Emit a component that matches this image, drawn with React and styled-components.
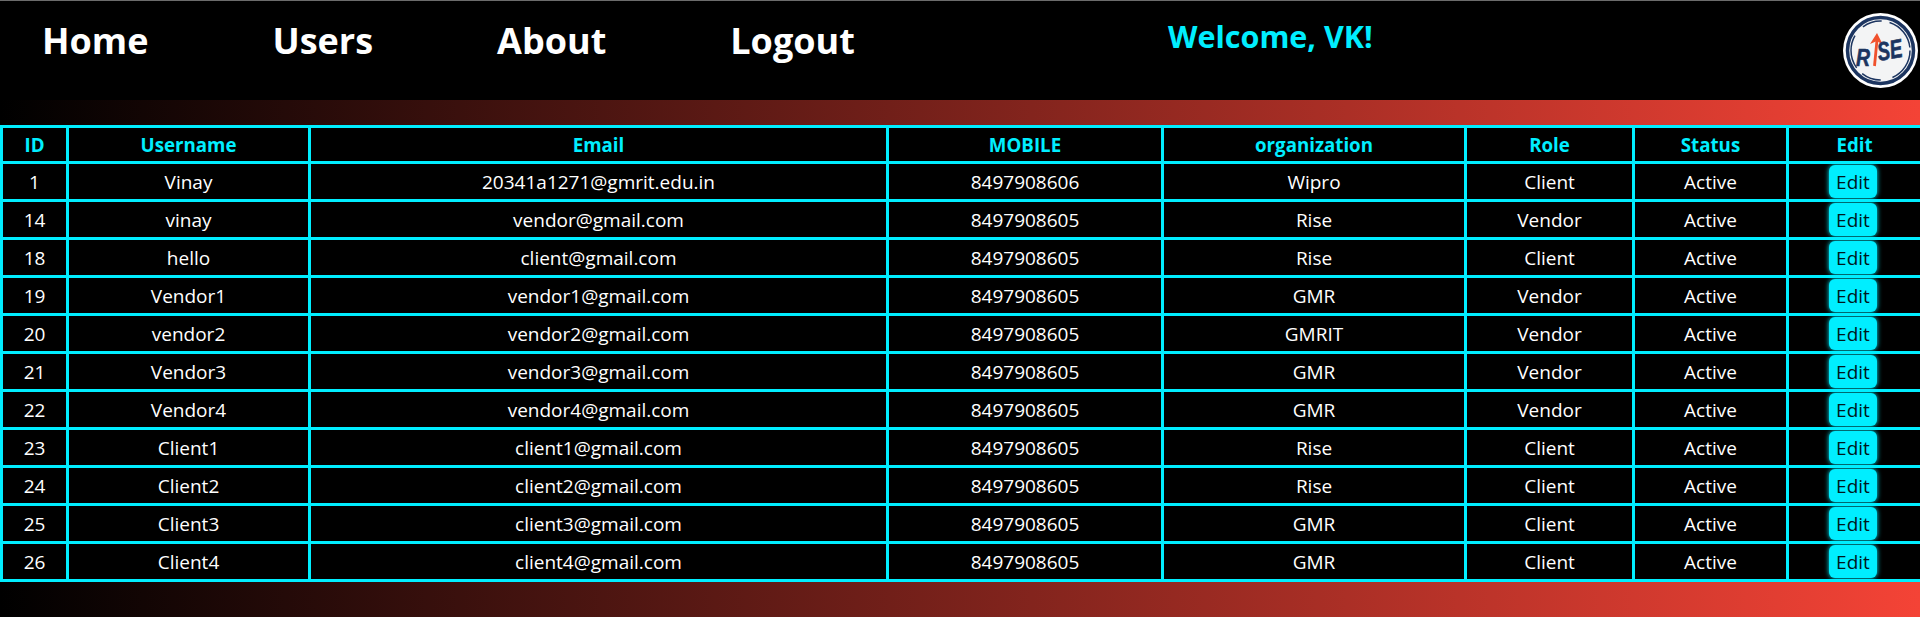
import styled, { createGlobalStyle } from 'styled-components';

const users = [
  [1, 'Vinay', '20341a1271@gmrit.edu.in', '8497908606', 'Wipro', 'Client'],
  [14, 'vinay', 'vendor@gmail.com', '8497908605', 'Rise', 'Vendor'],
  [18, 'hello', 'client@gmail.com', '8497908605', 'Rise', 'Client'],
  [19, 'Vendor1', 'vendor1@gmail.com', '8497908605', 'GMR', 'Vendor'],
  [20, 'vendor2', 'vendor2@gmail.com', '8497908605', 'GMRIT', 'Vendor'],
  [21, 'Vendor3', 'vendor3@gmail.com', '8497908605', 'GMR', 'Vendor'],
  [22, 'Vendor4', 'vendor4@gmail.com', '8497908605', 'GMR', 'Vendor'],
  [23, 'Client1', 'client1@gmail.com', '8497908605', 'Rise', 'Client'],
  [24, 'Client2', 'client2@gmail.com', '8497908605', 'Rise', 'Client'],
  [25, 'Client3', 'client3@gmail.com', '8497908605', 'GMR', 'Client'],
  [26, 'Client4', 'client4@gmail.com', '8497908605', 'GMR', 'Client'],
];

const columns = [
  ['ID', 66],
  ['Username', 242],
  ['Email', 578],
  ['MOBILE', 275],
  ['organization', 303],
  ['Role', 168],
  ['Status', 154],
  ['Edit', 134],
];

const GlobalStyle = createGlobalStyle`
  html, body {
    margin: 0;
    padding: 0;
    background: #000;
  }
  body {
    font-family: 'Open Sans', 'Noto Sans', sans-serif;
  }
`;

const Logo = () => (
  <LogoMark viewBox="0 0 75 75" aria-label="Rise logo">
    <circle cx="37.5" cy="37.5" r="37.5" fill="#fff" />
    <circle cx="37.5" cy="37.5" r="33" fill="#f3f4f5" stroke="#1c3560" strokeWidth="3.5" />
    <circle cx="37.5" cy="37.5" r="29.5" fill="none" stroke="#1c3560" strokeWidth="1.5" strokeDasharray="34 12 20 8" />
    <LogoLetters x="13" y="53" fontSize="24" textLength="14" lengthAdjust="spacingAndGlyphs">R</LogoLetters>
    <path d="M31.5 53 L34 27" stroke="#f0512d" strokeWidth="2.8" fill="none" />
    <path d="M27 31 L34 20 L40 32 L34 28 Z" fill="#f0512d" />
    <LogoLetters x="36" y="48" fontSize="26" textLength="25" lengthAdjust="spacingAndGlyphs" transform="rotate(-10 36 48)">SE</LogoLetters>
  </LogoMark>
);

const App = () => {
  return (
    <Page>
      <GlobalStyle />
      <Header>
        <NavLinks>
          <NavLink>Home</NavLink>
          <NavLink>Users</NavLink>
          <NavLink>About</NavLink>
          <NavLink>Logout</NavLink>
        </NavLinks>
        <Welcome>Welcome, VK!</Welcome>
        <Logo />
      </Header>
      <Content>
        <UsersTable>
          <colgroup>
            {columns.map(([name, width]) => (
              <col key={name} style={{ width }} />
            ))}
          </colgroup>
          <thead>
            <tr>
              {columns.map(([name]) => (
                <HeadCell key={name}>{name}</HeadCell>
              ))}
            </tr>
          </thead>
          <tbody>
            {users.map(([id, username, email, mobile, org, role]) => (
              <tr key={id}>
                <Cell>{id}</Cell>
                <Cell>{username}</Cell>
                <Cell>{email}</Cell>
                <Cell>{mobile}</Cell>
                <Cell>{org}</Cell>
                <Cell>{role}</Cell>
                <Cell>Active</Cell>
                <EditCell>
                  <EditButton type="button">Edit</EditButton>
                </EditCell>
              </tr>
            ))}
          </tbody>
        </UsersTable>
      </Content>
    </Page>
  );
};

export default App;

const Page = styled.div`
  width: 100%;
  height: 617px;
  overflow: hidden;
  display: flex;
  flex-direction: column;
  background: #000;
`;

const Header = styled.header`
  box-sizing: border-box;
  height: 100px;
  flex: none;
  display: flex;
  align-items: flex-start;
  background: #000;
  border-top: 1px solid #6b6b6b;
`;

const NavLinks = styled.nav`
  display: flex;
  gap: 124px;
  padding: 18px 0 0 42px;
  width: 1124px;
  box-sizing: border-box;
`;

const NavLink = styled.a`
  color: #fff;
  font-size: 36px;
  line-height: 44px;
  font-weight: 700;
`;

const Welcome = styled.div`
  color: #00eeff;
  font-size: 30.5px;
  line-height: 36px;
  font-weight: 700;
  margin: 17px 0 0 44px;
  flex: 1;
`;

const LogoMark = styled.svg`
  width: 75px;
  height: 75px;
  flex: none;
  margin: 12px 2px 0 0;
`;

const LogoLetters = styled.text`
  font-family: 'Liberation Sans', sans-serif;
  font-weight: 700;
  font-style: italic;
  fill: #1c3560;
  stroke: #1c3560;
  stroke-width: 0.6;
`;

const Content = styled.main`
  flex: 1;
  padding-top: 25px;
  background: linear-gradient(to right, #000, #f44336);
`;

const UsersTable = styled.table`
  width: 1920px;
  table-layout: fixed;
  border-collapse: collapse;
  background: #000;
  border: 3px solid #00eeff;
`;

const HeadCell = styled.th`
  border: 3px solid #00eeff;
  color: #00eeff;
  font-size: 18.7px;
  font-weight: 700;
  height: 33px;
  padding: 0;
  text-align: center;
`;

const Cell = styled.td`
  border: 3px solid #00eeff;
  color: #fff;
  font-size: 19px;
  height: 35px;
  padding: 0;
  text-align: center;
`;

const EditCell = styled(Cell)`
  padding-right: 3px;
`;

const EditButton = styled.button`
  display: block;
  margin: 0 auto;
  width: 48px;
  height: 33px;
  padding: 0;
  border: none;
  border-radius: 6px;
  background: #00eeff;
  color: #00181c;
  font-family: inherit;
  font-size: 19px;
  box-shadow: 0 0 5px #00eeff;
`;
